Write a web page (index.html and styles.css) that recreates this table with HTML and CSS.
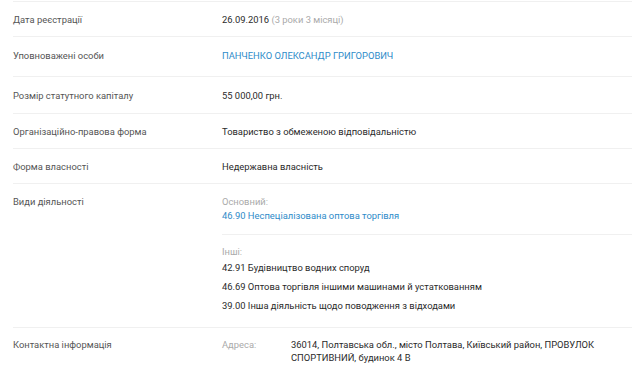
FILE: index.html
```html
<!DOCTYPE html>
<html lang="uk">
<head>
<meta charset="utf-8">
<link rel="stylesheet" href="styles.css">
</head>
<body>
<div class="table">
  <div class="row">
    <div class="label">Дата реєстрації</div>
    <div class="value">26.09.2016 <span class="muted">(3 роки 3 місяці)</span></div>
  </div>
  <div class="row row-person">
    <div class="label">Уповноважені особи</div>
    <div class="value"><a class="link" href="#">ПАНЧЕНКО ОЛЕКСАНДР ГРИГОРОВИЧ</a></div>
  </div>
  <div class="row row-capital">
    <div class="label">Розмір статутного капіталу</div>
    <div class="value">55 000,00 грн.</div>
  </div>
  <div class="row">
    <div class="label">Організаційно-правова форма</div>
    <div class="value">Товариство з обмеженою відповідальністю</div>
  </div>
  <div class="row">
    <div class="label">Форма власності</div>
    <div class="value">Недержавна власність</div>
  </div>
  <div class="row">
    <div class="label">Види діяльності</div>
    <div class="value">
      <div class="group">
        <div class="muted">Основний:</div>
        <a class="link main-activity" href="#">46.90 Неспеціалізована оптова торгівля</a>
      </div>
      <div class="group group-other">
        <div class="muted">Інші:</div>
        <div class="item">42.91 Будівництво водних споруд</div>
        <div class="item">46.69 Оптова торгівля іншими машинами й устаткованням</div>
        <div class="item">39.00 Інша діяльність щодо поводження з відходами</div>
      </div>
    </div>
  </div>
  <div class="row">
    <div class="label">Контактна інформація</div>
    <div class="value">
      <div class="contact">
        <div class="muted">Адреса:</div>
        <div>36014, Полтавська обл., місто Полтава, Київський район, ПРОВУЛОК СПОРТИВНИЙ, будинок 4 В</div>
      </div>
    </div>
  </div>
</div>
</body>
</html>
```

FILE: styles.css
```css
html, body {
  margin: 0;
  padding: 0;
  background: #fff;
}
body {
  font-family: Roboto, "Noto Sans", sans-serif;
  font-size: 9.4px;
  line-height: 13px;
  color: #333;
}
.table {
  padding: 1px 8px 0 13px;
}
.row {
  display: grid;
  grid-template-columns: 209px 1fr;
  border-top: 1px solid #f0f0f0;
  padding: 10.5px 0 10.5px;
}
.row-person {
  padding: 11.5px 0 14.5px;
}
.row-capital {
  padding: 12px 0 11px;
}
.label {
  color: #555;
}
.value {
  color: #2a2a2a;
}
.muted {
  color: #aaa;
}
.link {
  color: #2e8bc9;
  text-decoration: none;
}
.main-activity {
  display: block;
  line-height: 15px;
}
.group {
  padding-bottom: 11px;
}
.group-other {
  border-top: 1px solid #f0f0f0;
  padding-top: 10.5px;
  padding-bottom: 1px;
}
.item {
  line-height: 19px;
}
.contact {
  display: grid;
  grid-template-columns: 69px 1fr;
  padding-right: 30px;
}
```
